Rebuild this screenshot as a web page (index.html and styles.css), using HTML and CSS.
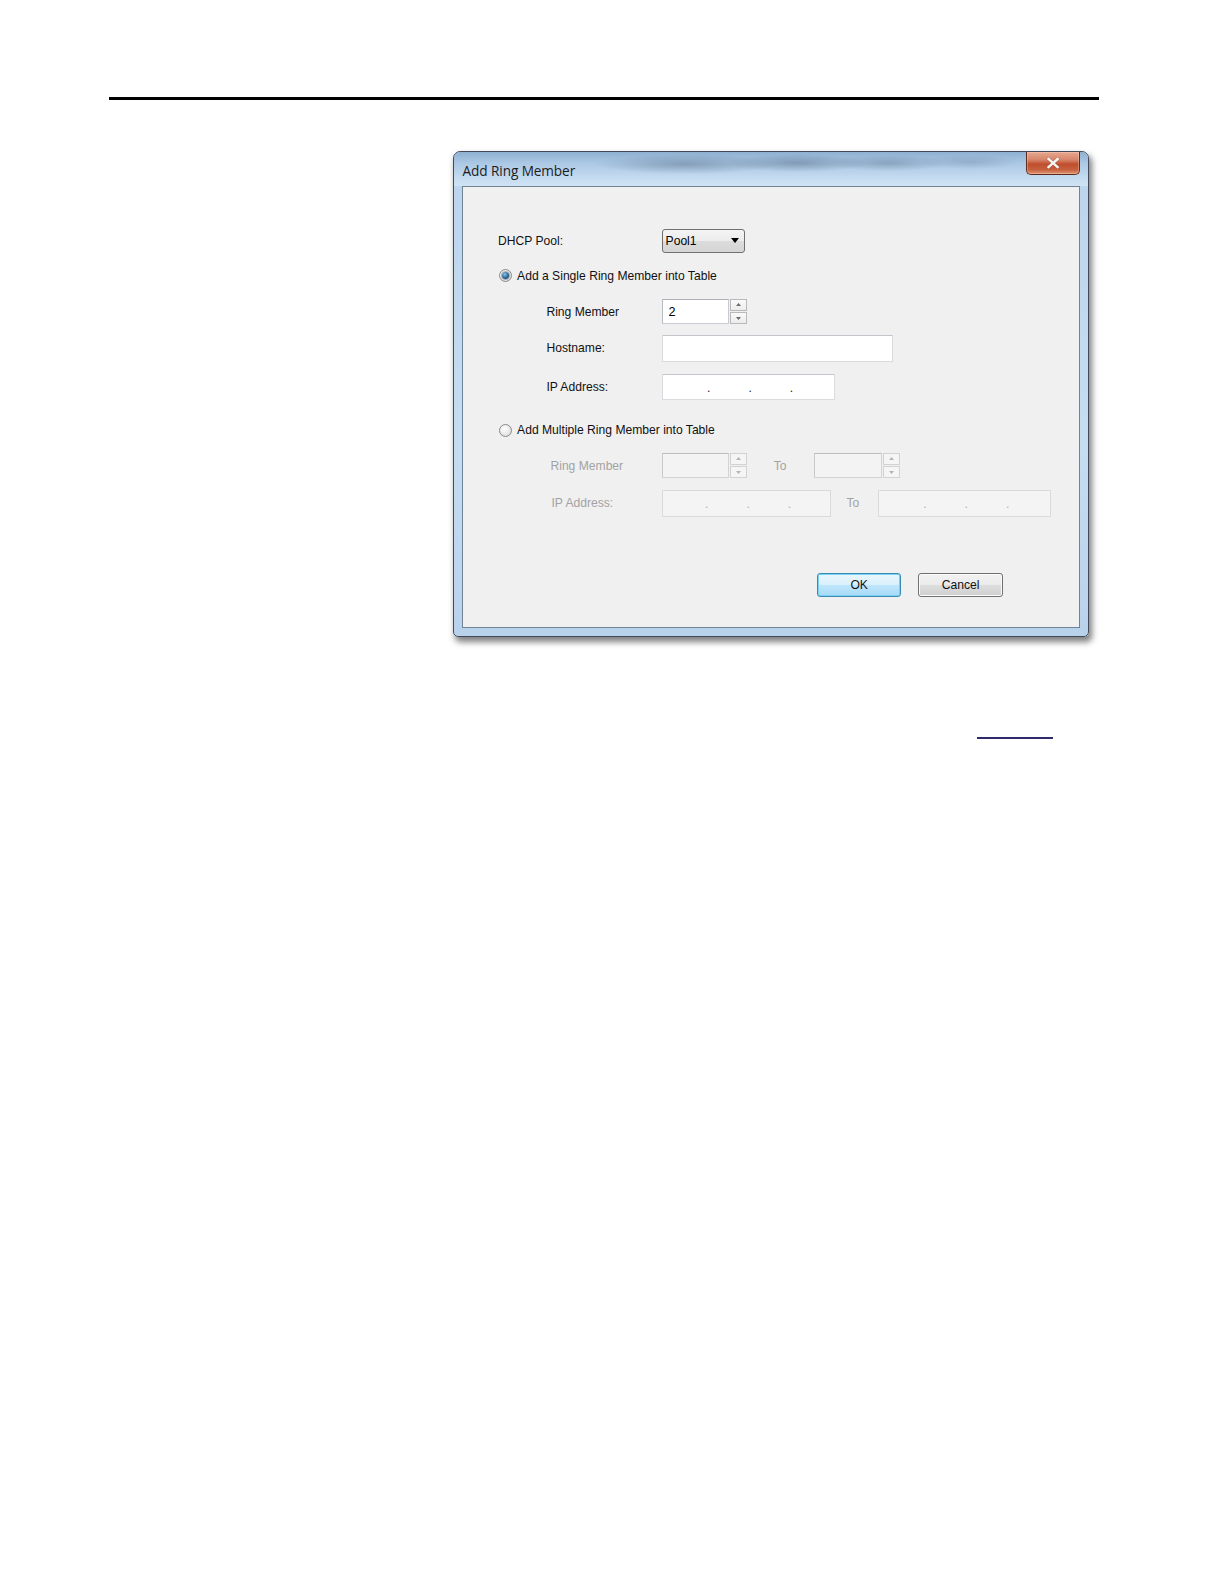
FILE: index.html
```html
<!DOCTYPE html>
<html>
<head>
<meta charset="utf-8">
<title>Add Ring Member</title>
<link rel="stylesheet" href="styles.css">
</head>
<body>
<div class="page">
  <div class="rule"></div>

  <div class="dialog">
    <div class="titlebar">
      <span class="title">Add Ring Member</span>
      <div class="close">
        <svg width="14" height="12" viewBox="0 0 14 12"><path d="M2.5 2 L11.5 10 M11.5 2 L2.5 10" stroke="#7a3a26" stroke-width="3.4" stroke-linecap="square" opacity="0.35"/><path d="M2.5 2 L11.5 10 M11.5 2 L2.5 10" stroke="#f6f6f6" stroke-width="2.4" stroke-linecap="square"/></svg>
      </div>
    </div>

    <div class="client">
      <div class="row row-dhcp">
        <span class="label main-label">DHCP Pool:</span>
        <div class="combo">
          <span class="combo-text">Pool1</span>
          <svg class="combo-arrow" width="8" height="5" viewBox="0 0 8 5"><path d="M0 0 H8 L4 5 Z" fill="#000"/></svg>
        </div>
      </div>

      <div class="row radio-row r1">
        <span class="radio checked"><span class="dot"></span></span>
        <span class="radio-text">Add a Single Ring Member into Table</span>
      </div>

      <div class="row sub-row s-ring">
        <span class="label sub-label">Ring Member</span>
        <div class="spin">
          <div class="spin-box"><span class="spin-val">2</span></div>
          <div class="spin-btns">
            <span class="sbtn"><svg width="5" height="3" viewBox="0 0 5 3"><path d="M0 3 L2.5 0 L5 3Z" fill="#6d6d6d"/></svg></span>
            <span class="sbtn"><svg width="5" height="3" viewBox="0 0 5 3"><path d="M0 0 L5 0 L2.5 3Z" fill="#6d6d6d"/></svg></span>
          </div>
        </div>
      </div>

      <div class="row sub-row s-host">
        <span class="label sub-label">Hostname:</span>
        <div class="textbox host-box"></div>
      </div>

      <div class="row sub-row s-ip">
        <span class="label sub-label">IP Address:</span>
        <div class="textbox ip-box">
          <span class="ipdot">.</span><span class="ipdot">.</span><span class="ipdot">.</span>
        </div>
      </div>

      <div class="row radio-row r2">
        <span class="radio"></span>
        <span class="radio-text">Add Multiple Ring Member into Table</span>
      </div>

      <div class="row sub-row d-ring">
        <span class="label dis-label">Ring Member</span>
        <div class="spin disabled">
          <div class="spin-box"></div>
          <div class="spin-btns">
            <span class="sbtn"><svg width="5" height="3" viewBox="0 0 5 3"><path d="M0 3 L2.5 0 L5 3Z" fill="#b5b5b5"/></svg></span>
            <span class="sbtn"><svg width="5" height="3" viewBox="0 0 5 3"><path d="M0 0 L5 0 L2.5 3Z" fill="#b5b5b5"/></svg></span>
          </div>
        </div>
        <span class="to to-ring">To</span>
        <div class="spin disabled">
          <div class="spin-box"></div>
          <div class="spin-btns">
            <span class="sbtn"><svg width="5" height="3" viewBox="0 0 5 3"><path d="M0 3 L2.5 0 L5 3Z" fill="#b5b5b5"/></svg></span>
            <span class="sbtn"><svg width="5" height="3" viewBox="0 0 5 3"><path d="M0 0 L5 0 L2.5 3Z" fill="#b5b5b5"/></svg></span>
          </div>
        </div>
      </div>

      <div class="row sub-row d-ip">
        <span class="label dis-label dis-ip">IP Address:</span>
        <div class="textbox dis-box dip1">
          <span class="ipdot">.</span><span class="ipdot">.</span><span class="ipdot">.</span>
        </div>
        <span class="to to-ip">To</span>
        <div class="textbox dis-box dip2">
          <span class="ipdot">.</span><span class="ipdot">.</span><span class="ipdot">.</span>
        </div>
      </div>

      <div class="row buttons">
        <button class="btn ok">OK</button>
        <button class="btn cancel">Cancel</button>
      </div>
    </div>
  </div>

  <div class="link-line"><a class="xref" href="#"></a></div>
</div>
</body>
</html>
```

FILE: styles.css
```css
* { box-sizing: border-box; }

html, body {
  margin: 0;
  padding: 0;
  background: #ffffff;
  overflow: hidden;
}

body {
  font-family: "Liberation Sans", Arial, sans-serif;
  font-size: 12px;
  color: #111;
}

.page {
  padding-top: 96px;
  zoom: 1.0101;
}

.rule {
  margin-left: 108px;
  width: 980px;
  height: 3px;
  background: #000;
}

/* ---------- dialog window ---------- */
.dialog {
  margin-top: 51px;
  margin-left: 448px;
  width: 630px;
  height: 481px;
  border: 1px solid #3f4b58;
  border-radius: 7px 7px 5px 5px;
  background:
    linear-gradient(180deg, #bcd4ec 0%, #c6dcf1 60%, #b9d2eb 100%);
  box-shadow: 2px 4px 6px rgba(0, 0, 0, 0.5);
  display: flex;
  flex-direction: column;
}

.titlebar {
  height: 33px;
  display: flex;
  align-items: flex-start;
  padding-left: 9px;
  padding-right: 8px;
  border-radius: 6px 6px 0 0;
  background:
    radial-gradient(ellipse 90px 10px at 230px 12px, rgba(60, 80, 105, 0.35), rgba(60, 80, 105, 0) 100%),
    radial-gradient(ellipse 70px 9px at 340px 11px, rgba(60, 80, 105, 0.38), rgba(60, 80, 105, 0) 100%),
    radial-gradient(ellipse 60px 8px at 430px 11px, rgba(60, 80, 105, 0.3), rgba(60, 80, 105, 0) 100%),
    radial-gradient(ellipse 50px 7px at 510px 10px, rgba(60, 80, 105, 0.2), rgba(60, 80, 105, 0) 100%),
    linear-gradient(180deg, #8fb0d1 0%, #a9c6e3 30%, #c4dbf0 75%, #d0e3f4 100%);
}

.title {
  margin-top: 8px;
  font-family: "Open Sans", "Liberation Sans", sans-serif;
  font-size: 13.5px;
  color: #1c1c1c;
  letter-spacing: -0.1px;
}

.close {
  margin-left: auto;
  width: 53px;
  height: 22px;
  border: 1px solid #5e2c1e;
  border-top: none;
  border-radius: 0 0 5px 5px;
  background: linear-gradient(180deg, #e7a791 0%, #d7856a 35%, #bf4f2e 55%, #c65f3d 80%, #dd9677 100%);
  display: flex;
  align-items: center;
  justify-content: center;
  box-shadow: inset 0 0 0 1px rgba(255, 220, 200, 0.35);
}

.client {
  margin: 0 8px 8px 8px;
  height: 438px;
  border: 1px solid #6f8296;
  background: #f0f0f0;
  padding: 42px 0 0 35px;
  display: flex;
  flex-direction: column;
}

/* ---------- rows ---------- */
.row {
  display: flex;
  align-items: center;
}

.label { flex: none; }

.main-label { width: 162px; }

.sub-row { padding-left: 48px; }

.sub-label { width: 114px; }

.dis-label {
  width: 114px;
  padding-left: 4px;
  color: #a3a3a3;
}
.dis-ip { padding-left: 5px; }

.row-dhcp { height: 23px; }
.r1 { margin-top: 16px; height: 14px; }
.s-ring { margin-top: 16px; height: 25px; }
.s-host { margin-top: 11px; height: 26px; }
.s-ip { margin-top: 12px; height: 27px; }
.r2 { margin-top: 22px; height: 14px; }
.d-ring { margin-top: 15px; height: 26px; }
.d-ip { margin-top: 11px; height: 27px; }
.buttons {
  margin-top: 55px;
  justify-content: flex-end;
  padding-right: 75px;
  gap: 17px;
}

/* ---------- combo ---------- */
.combo {
  width: 83px;
  height: 24px;
  border: 1px solid #707070;
  border-radius: 3px;
  background: linear-gradient(180deg, #f4f4f4 0%, #ececec 48%, #dcdcdc 52%, #d5d5d5 100%);
  display: flex;
  align-items: center;
  padding-left: 3px;
  padding-right: 5px;
}
.combo-text { color: #000; }
.combo-arrow { margin-left: auto; }

/* ---------- radio ---------- */
.radio {
  width: 13px;
  height: 13px;
  margin-left: 1px;
  border-radius: 50%;
  border: 1px solid #8a8a8a;
  background: radial-gradient(circle at 40% 35%, #ffffff 0%, #e6e6e6 60%, #cfcfcf 100%);
  display: flex;
  align-items: center;
  justify-content: center;
  flex: none;
}
.radio .dot {
  width: 7px;
  height: 7px;
  border-radius: 50%;
  background: radial-gradient(circle at 40% 35%, #8fc6ea 0%, #2a6592 55%, #1a3a56 100%);
  box-shadow: 0 0 0 1px rgba(40, 60, 80, 0.35);
}
.radio-text {
  margin-left: 5px;
  color: #111;
}

/* ---------- spin ---------- */
.spin { display: flex; align-items: center; }
.spin-box {
  width: 67px;
  height: 25px;
  background: #fff;
  border: 1px solid #c8cbd1;
  border-top-color: #aeb1b7;
  border-left-color: #b8bbc1;
  display: flex;
  align-items: center;
  padding-left: 6px;
}
.spin-val { color: #000; font-size: 12.5px; }
.spin-btns {
  margin-left: 1px;
  display: flex;
  flex-direction: column;
  gap: 1px;
}
.sbtn {
  width: 17px;
  height: 12px;
  border: 1px solid #b9b9b9;
  background: linear-gradient(180deg, #fbfbfb, #ececec);
  display: flex;
  align-items: center;
  justify-content: center;
}
.spin.disabled .spin-box {
  background: #f3f3f3;
  border-color: #d3d3d3;
  border-top-color: #bdbdbd;
  border-left-color: #c9c9c9;
}
.spin.disabled .sbtn {
  border-color: #d2d2d2;
  background: #f5f5f5;
}

.to {
  color: #a3a3a3;
  flex: none;
}
.to-ring { width: 66px; padding-left: 26px; }
.to-ip { width: 46px; padding-left: 15px; }

/* ---------- text boxes ---------- */
.textbox {
  height: 26px;
  background: #fff;
  border: 1px solid #d9dbdf;
  border-top-color: #c3c6cb;
  display: flex;
  align-items: center;
}
.host-box { width: 229px; }
.ip-box { width: 172px; padding-left: 44px; }
.ipdot {
  width: 41px;
  flex: none;
  color: #222;
  line-height: 1;
  padding-top: 2px;
}
.dis-box {
  background: #f4f4f4;
  border-color: #dadada;
}
.dis-box .ipdot { color: #b0b0b0; }
.dip1 { width: 168px; padding-left: 42px; }
.dip2 { width: 172px; padding-left: 44px; }

/* ---------- buttons ---------- */
.btn {
  font-family: "Liberation Sans", Arial, sans-serif;
  font-size: 12px;
  color: #111;
  height: 24px;
  border-radius: 3px;
  padding: 0;
}
.ok {
  width: 83px;
  border: 1px solid #3a8bb4;
  background: linear-gradient(180deg, #eaf6fd 0%, #d9f0fc 48%, #bee6fd 52%, #a7d9f5 100%);
  box-shadow: inset 0 0 0 1px #7ad0f0;
}
.cancel {
  width: 84px;
  border: 1px solid #707070;
  background: linear-gradient(180deg, #f2f2f2 0%, #ebebeb 48%, #dddddd 52%, #cfcfcf 100%);
  box-shadow: inset 0 0 0 1px #fbfbfb;
}

/* ---------- link underline ---------- */
.link-line {
  margin-top: 99px;
  margin-left: 967px;
}
.xref {
  display: block;
  width: 75px;
  height: 2px;
  background: #2f2a6b;
}
```
